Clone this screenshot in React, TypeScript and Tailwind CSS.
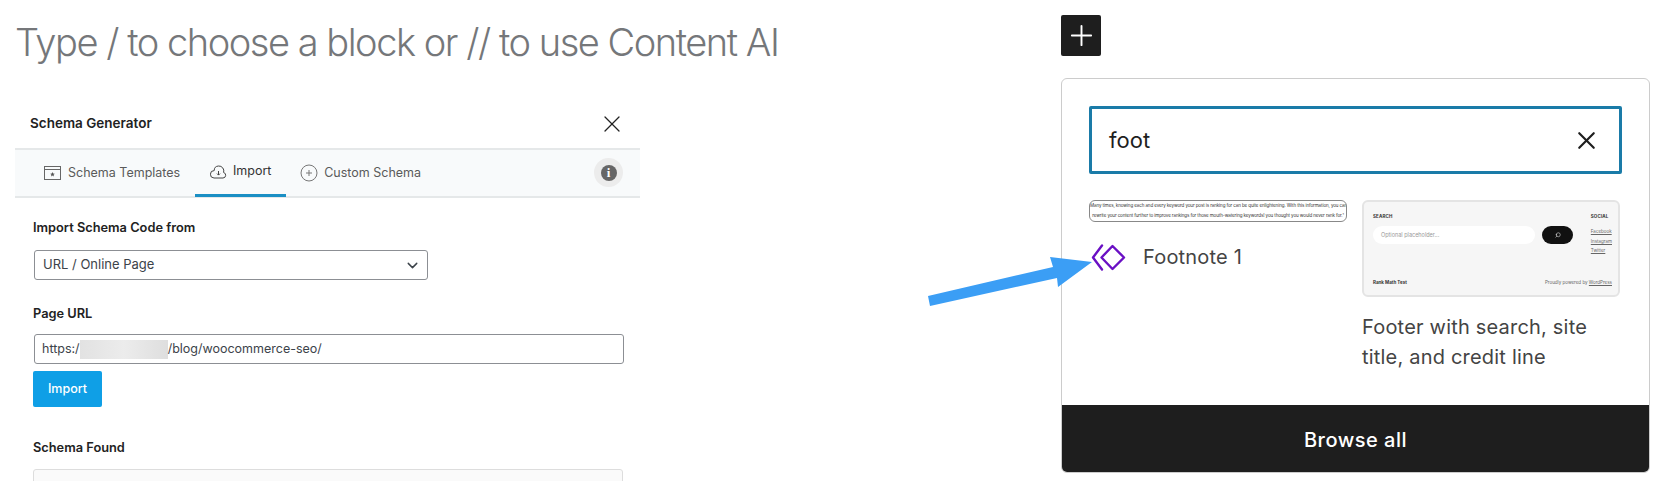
import { ChevronDown, Plus, Search, X } from "lucide-react"

const sans = "font-['Inter',sans-serif]"

function TemplateIcon() {
    return (
        <svg width="17" height="14" viewBox="0 0 17 14" fill="none" stroke="#666" strokeWidth="1">
            <rect x="0.5" y="0.5" width="16" height="13" />
            <path d="M0.5 3.5h16" />
            <path d="M8.5 6l.7 1.5 1.6.2-1.2 1.1.3 1.6-1.4-.8-1.4.8.3-1.6-1.2-1.1 1.6-.2z" fill="#555" stroke="none" />
        </svg>
    )
}

function CloudIcon() {
    return (
        <svg width="17" height="14" viewBox="0 0 17 14" fill="none" stroke="#444" strokeWidth="1">
            <path d="M4 13h9a2.8 2.8 0 0 0 .6-5.5A5 5 0 0 0 8.5 1 4.6 4.6 0 0 0 4.2 5.6 3.7 3.7 0 0 0 4 13z" />
            <path d="M8.5 6v4M7 8.6l1.5 1.5L10 8.6" />
        </svg>
    )
}

function PlusCircleIcon() {
    return (
        <svg width="18" height="18" viewBox="0 0 18 18" fill="none" stroke="#777" strokeWidth="1">
            <circle cx="9" cy="9" r="8" />
            <path d="M9 6v6M6 9h6" />
        </svg>
    )
}

function SchemaPanel() {
    return (
        <div className="mt-[35px] w-[625px] text-[12.5px] text-[#333]">
            <div className="flex h-[49px] items-center justify-between pl-[15px] pr-[14px]">
                <h2 className="text-[13.5px] font-semibold text-[#222]">Schema Generator</h2>
                <X className="h-[28px] w-[28px] shrink-0 text-[#222]" strokeWidth={1.1} />
            </div>
            <div className="flex h-[50px] items-end justify-between border-y-2 border-[#e5e8e9] bg-[#f8fafb] pr-[17px]">
                <div className="flex h-full items-center pl-[29px]">
                    <div className="flex items-center gap-[7px] text-[#5a5a5a]">
                        <TemplateIcon />
                        <span>Schema Templates</span>
                    </div>
                    <div className="relative ml-[15px] flex h-[48px] w-[91px] items-center justify-center gap-[6px] border-b-[3px] border-[#1b8fc4] text-[#333]">
                        <CloudIcon />
                        <span>Import</span>
                    </div>
                    <div className="ml-[14px] flex items-center gap-[6px] text-[#5a5a5a]">
                        <PlusCircleIcon />
                        <span>Custom Schema</span>
                    </div>
                </div>
                <div className="mb-[9px] flex h-[29px] w-[29px] items-center justify-center rounded-full bg-[#ececec]">
                    <div className="flex h-[16px] w-[16px] items-center justify-center rounded-full bg-[#666] font-['Liberation_Serif',serif] text-[13px] font-bold leading-none text-white">
                        i
                    </div>
                </div>
            </div>
            <div className="pl-[18px]">
                <label className="mt-[21px] block text-[12.8px] font-semibold leading-[18px] text-[#222]">Import Schema Code from</label>
                <div className="ml-[1px] mt-[13px] flex h-[30px] w-[394px] items-center justify-between rounded-[3px] border border-[#8c8f94] bg-white pl-[8px] pr-[6px] text-[13px] text-[#3c434a]">
                    <span>URL / Online Page</span>
                    <ChevronDown className="h-[17px] w-[17px]" strokeWidth={2} />
                </div>
                <label className="mt-[25px] block text-[12.8px] font-semibold leading-[18px] text-[#222]">Page URL</label>
                <div className="ml-[1px] mt-[11px] flex h-[30px] w-[590px] items-center rounded-[3px] border border-[#8c8f94] bg-white pl-[7px] text-[#3c434a]">
                    <span>https:/</span>
                    <span className="h-[19px] w-[88px] bg-gradient-to-r from-[#e2e2e2] via-[#ececec] to-[#dedede]" />
                    <span>/blog/woocommerce-seo/</span>
                </div>
                <button className="mt-[7px] block h-[36px] w-[69px] rounded-[2px] bg-[#0f9fe6] text-center text-[12.5px] font-medium text-white">Import</button>
                <label className="mt-[32px] block text-[12.8px] font-semibold leading-[18px] text-[#222]">Schema Found</label>
                <div className="mt-[12px] h-[40px] w-[590px] rounded-t-[3px] border border-[#dddddd] bg-[#fafafa]" />
            </div>
        </div>
    )
}

function FooterPreview() {
    return (
        <div className="flex h-[97px] w-[258px] flex-col justify-between rounded-[6px] border-2 border-[#e4e4e4] bg-[#f6f6f6] pb-[8px] pl-[9px] pr-[6px] pt-[11px] text-[#333]">
            <div className="flex justify-between">
                <div className="w-[200px]">
                    <div className="text-[4.5px] font-bold leading-[8px] tracking-wide">SEARCH</div>
                    <div className="mt-[5px] flex items-center gap-[7px]">
                        <div className="flex h-[18px] w-[162px] items-center rounded-full bg-white pl-[8px] text-[5.5px] text-[#999]">Optional placeholder...</div>
                        <div className="flex h-[18px] w-[31px] items-center justify-center rounded-full bg-[#111]">
                            <Search className="h-[6px] w-[6px] -scale-x-100 text-white" />
                        </div>
                    </div>
                </div>
                <div className="text-[4.5px] leading-[8px]">
                    <div className="font-bold tracking-wide">SOCIAL</div>
                    <div className="mt-[7px] text-[#666] underline">Facebook</div>
                    <div className="mt-[2px] text-[#666] underline">Instagram</div>
                    <div className="mt-[1px] text-[#666] underline">Twitter</div>
                </div>
            </div>
            <div className="flex items-center justify-between text-[4.5px] leading-[8px]">
                <span className="font-bold">Rank Math Test</span>
                <span className="text-[#666]">Proudly powered by <span className="underline">WordPress</span></span>
            </div>
        </div>
    )
}

function FootnoteIcon() {
    return (
        <svg width="35" height="27" viewBox="0 0 35 27" fill="none" stroke="#6a10c4" strokeWidth="2.4" strokeLinejoin="round" strokeLinecap="round">
            <path d="M11 1.5L2 13.5l9 12" />
            <path d="M21.5 2L33 13.5 21.5 25 10.5 13.5z" />
        </svg>
    )
}

function BlockInserter() {
    return (
        <div className="w-[589px]">
            <div className="mt-[15px] flex h-[41px] w-[40px] items-center justify-center rounded-[2px] bg-[#1e1e1e]">
                <Plus className="h-[33px] w-[33px] shrink-0 text-white" strokeWidth={1.4} />
            </div>
            <div className="mt-[22px] flex h-[395px] flex-col overflow-hidden rounded-[6px] border border-[#cccccc] bg-white">
                <div className="flex-1 px-[27px] pt-[27px]">
                    <div className="flex h-[68px] w-[533px] items-center justify-between rounded-[2px] border-[3px] border-[#1a7ba8] pl-[17px] pr-[18px] text-[22px] text-[#1e1e1e]">
                        <span>foot</span>
                        <X className="h-[29px] w-[29px] shrink-0" strokeWidth={1.8} />
                    </div>
                    <div className="mt-[26px] flex gap-[15px]">
                        <div className="w-[258px]">
                            <div className="h-[22px] overflow-hidden whitespace-nowrap rounded-[6px] border border-[#888] text-center text-[4.5px] leading-[10px] tracking-[-0.1px] text-[#333]">
                                <div>Many times, knowing each and every keyword your post is ranking for can be quite enlightening. With this information, you can</div>
                                <div>rewrite your content further to improve rankings for those mouth-watering keywords! you thought you would never rank for.¹</div>
                            </div>
                            <div className="mt-[21px] flex items-center gap-[17px] pl-[2px]">
                                <FootnoteIcon />
                                <span className="text-[20px] leading-[28px] tracking-[0.2px] text-[#444]">Footnote 1</span>
                            </div>
                        </div>
                        <div className="w-[258px]">
                            <FooterPreview />
                            <p className="mt-[15px] text-[20px] leading-[30px] tracking-[0.2px] text-[#444]">Footer with search, site title, and credit line</p>
                        </div>
                    </div>
                </div>
                <div className="flex h-[67px] items-center justify-center bg-[#1e1e1e] pt-[2px] text-[20px] font-medium tracking-[0.5px] text-white">Browse all</div>
            </div>
        </div>
    )
}

export default function App() {
    return (
        <div className={`relative flex h-[481px] w-[1672px] justify-between overflow-hidden bg-white pl-[15px] pr-[22px] ${sans}`}>
            <div>
                <h1 className="mt-[20px] whitespace-nowrap text-[38px] font-light leading-[44px] tracking-[-1.47px] text-[#75777a]">
                    Type / to choose a block or // to use Content AI
                </h1>
                <SchemaPanel />
            </div>
            <BlockInserter />
            {/* arrow pointing at the footnote block */}
            <svg className="absolute left-[925px] top-[250px]" width="170" height="60" viewBox="0 0 170 60">
                <path d="M3 46L128 17 125 7 167 12 133 37 132 28 5 56z" fill="#3b9ef5" />
            </svg>
        </div>
    )
}
